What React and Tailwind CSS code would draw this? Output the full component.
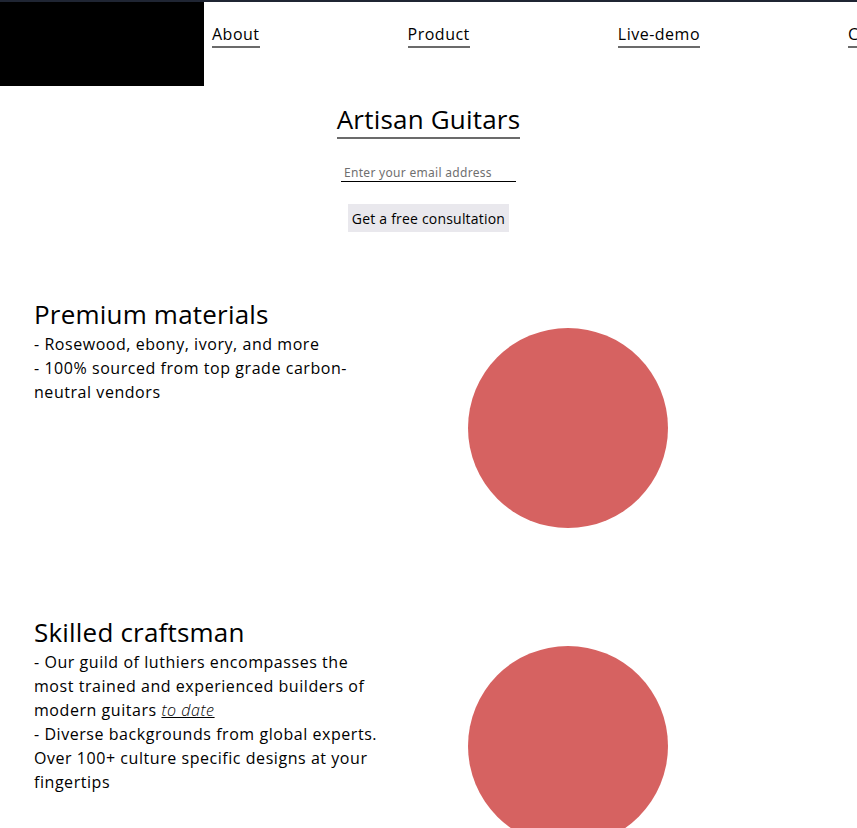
import React from 'react';

const navLinks = ['About', 'Product', 'Live-demo', 'Contact'];

const sections = [
  {
    title: 'Premium materials',
    lines: [
      <>- Rosewood, ebony, ivory, and more</>,
      <>- 100% sourced from top grade carbon-<br />neutral vendors</>,
    ],
  },
  {
    title: 'Skilled craftsman',
    lines: [
      <>
        - Our guild of luthiers encompasses the<br />most trained and experienced builders of<br />modern guitars{' '}
        <a href="#" className="italic font-light underline">to date</a>
      </>,
      <>- Diverse backgrounds from global experts.<br />Over 100+ culture specific designs at your<br />fingertips</>,
    ],
  },
];

const App = () => {
  return (
    <div className="w-[857px] h-[828px] overflow-hidden bg-white text-black border-t-2 border-[#1f2533] font-['Open_Sans',sans-serif]">
      <header className="flex items-start">
        <div className="w-[204px] h-[84px] bg-black shrink-0"></div>
        <nav className="flex gap-[148px] pl-2 pt-[21px] whitespace-nowrap">
          {navLinks.map(link => (
            <a key={link} href="#" className="text-[16px] leading-[22px] tracking-[0.5px] border-b-2 border-[#6b6b6b] pb-[1px]">
              {link}
            </a>
          ))}
        </nav>
      </header>

      <div className="flex flex-col items-center">
        <h1 className="mt-[16px] text-[26px] leading-[34px] tracking-[0.2px] border-b-2 border-[#6b6b6b] pb-[1px]">Artisan Guitars</h1>
        <input
          type="email"
          placeholder="Enter your email address"
          className="mt-[26px] w-[175px] h-[17px] border-b border-black px-[3px] text-[12px] tracking-[0.3px] font-['Noto_Sans',sans-serif] placeholder:text-[#6f6f6f] outline-none"
        />
        <button className="mt-[22px] bg-[#e9e8ed] px-[4px] h-[28px] text-[14px] tracking-[0.2px]">Get a free consultation</button>
      </div>

      <main className="mt-[64px] flex flex-col gap-[86px]">
        {sections.map(section => (
          <section key={section.title} className="flex items-start">
            <div className="w-[380px] pl-[34px] shrink-0">
              <h2 className="text-[26px] leading-[36px] tracking-[0.2px]">{section.title}</h2>
              {section.lines.map((line, i) => (
                <p key={i} className="text-[16px] leading-[24px] tracking-[0.55px]">{line}</p>
              ))}
            </div>
            <div className="ml-[88px] mt-[32px] w-[200px] h-[200px] rounded-full bg-[#d66261] shrink-0"></div>
          </section>
        ))}
      </main>
    </div>
  );
};

export default App;
